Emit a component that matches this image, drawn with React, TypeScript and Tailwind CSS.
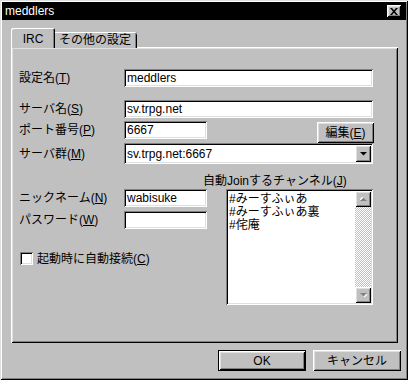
import React from "react";

const raised =
  "shadow-[inset_1px_1px_#fff,inset_-1px_-1px_#000,inset_2px_2px_#dfdfdf,inset_-2px_-2px_#808080]";
const sunken =
  "shadow-[inset_1px_1px_#808080,inset_-1px_-1px_#fff,inset_2px_2px_#000,inset_-2px_-2px_#dfdfdf]";

const Key = ({ k }: { k: string }) => (
  <>
    (<span className="underline underline-offset-1">{k}</span>)
  </>
);

const Label = ({ text, k }: { text: string; k: string }) => (
  <div className="flex h-[18px] w-[105px] shrink-0 items-center whitespace-nowrap">
    {text}
    <Key k={k} />
  </div>
);

const Input = ({ value, w }: { value?: string; w: string }) => (
  <div className={`flex h-[18px] items-center bg-white pl-[3px] ${w} ${sunken}`}>{value}</div>
);

const Arrow = ({ down, disabled }: { down?: boolean; disabled?: boolean }) => (
  <svg width="7" height="4" viewBox="0 0 7 4" className={down ? "" : "rotate-180"}>
    {disabled && <path d="M1 1h7L4.5 4.5z" fill="#fff" />}
    <path d="M0 0h7L3.5 3.5z" fill={disabled ? "#808080" : "#000"} />
  </svg>
);

const App = () => {
  return (
    <div className="h-[380px] w-[408px] overflow-hidden bg-[#c0c0c0] p-[2px] text-[12px] leading-none text-black font-[family-name:'Liberation_Sans','Noto_Sans_CJK_JP',sans-serif] shadow-[inset_1px_1px_#dfdfdf,inset_-1px_-1px_#000,inset_2px_2px_#fff,inset_-2px_-2px_#808080]">
      <div className="h-[376px] w-[404px]">
        {/* TITLE */}
        <div className="flex h-[18px] items-center justify-between bg-black pl-[3px] text-white">
          <span>meddlers</span>
          <div className={`mr-[5px] flex h-[12px] w-[14px] items-center justify-center bg-[#c0c0c0] ${raised}`}>
            <svg width="8" height="7" viewBox="0 0 8 7">
              <path d="M0 0h2l2 2.2L6 0h2L5 3.5 8 7H6L4 4.8 2 7H0l3-3.5z" fill="#000" />
            </svg>
          </div>
        </div>

        {/* TABS */}
        <div className="ml-[9px] mt-[8px] flex h-[20px] items-end">
          <div className="relative z-10 flex h-[20px] w-[44px] items-start justify-center rounded-t-[2px] bg-[#c0c0c0] pt-[5px] shadow-[inset_1px_1px_#fff,inset_-1px_0_#000,inset_-2px_0_#808080]">
            IRC
          </div>
          <div className="flex h-[16px] items-center rounded-tr-[2px] bg-[#c0c0c0] pl-[4px] pr-[6px] shadow-[inset_0_1px_#fff,inset_-1px_0_#000,inset_-2px_0_#808080]">
            その他の設定
          </div>
        </div>

        {/* PANEL */}
        <div className={`-mt-px ml-[9px] h-[296px] w-[387px] pl-[8px] pt-[22px] ${raised}`}>
          <div className="flex items-center">
            <Label text="設定名" k="T" />
            <Input value="meddlers" w="w-[249px]" />
          </div>
          <div className="mt-[13px] flex items-center">
            <Label text="サーバ名" k="S" />
            <Input value="sv.trpg.net" w="w-[249px]" />
          </div>
          <div className="mt-[3px] flex h-[22px] items-start">
            <Label text="ポート番号" k="P" />
            <Input value="6667" w="w-[83px]" />
            <div className={`ml-[110px] mt-px flex h-[21px] w-[57px] items-center justify-center ${raised}`}>
              編集<Key k="E" />
            </div>
          </div>
          <div className="flex items-center">
            <div className="flex h-[21px] w-[105px] shrink-0 items-center">
              サーバ群<Key k="M" />
            </div>
            <div className={`flex h-[21px] w-[249px] items-center justify-between bg-white pl-[3px] ${sunken}`}>
              <span>sv.trpg.net:6667</span>
              <div className={`mr-[2px] flex h-[17px] w-[16px] items-center justify-center bg-[#c0c0c0] ${raised}`}>
                <Arrow down />
              </div>
            </div>
          </div>

          <div className="ml-[184px] mt-[8px] flex h-[17px] items-center whitespace-nowrap">
            自動Joinするチャンネル<Key k="J" />
          </div>

          <div className="flex">
            <div className="w-[207px] shrink-0">
              <div className="flex items-center">
                <Label text="ニックネーム" k="N" />
                <Input value="wabisuke" w="w-[83px]" />
              </div>
              <div className="mt-[4px] flex items-center">
                <Label text="パスワード" k="W" />
                <Input w="w-[83px]" />
              </div>
              <div className="mt-[23px] flex items-center gap-[4px] pl-px">
                <div className={`h-[13px] w-[13px] bg-white ${sunken}`} />
                <span>
                  起動時に自動接続<Key k="C" />
                </span>
              </div>
            </div>

            <div className={`flex h-[116px] w-[147px] bg-white ${sunken}`}>
              <div className="flex-1 pl-[3px] pt-[4px] leading-[13px]">
                <div>#みーすふぃあ</div>
                <div>#みーすふぃあ裏</div>
                <div>#侘庵</div>
              </div>
              <div className="my-[2px] mr-[2px] flex w-[16px] flex-col">
                <div className={`flex h-[16px] items-center justify-center bg-[#c0c0c0] ${raised}`}>
                  <Arrow disabled />
                </div>
                <div className="flex-1 bg-[repeating-conic-gradient(#c0c0c0_0%_25%,#fff_0%_50%)] bg-[length:2px_2px]" />
                <div className={`flex h-[16px] items-center justify-center bg-[#c0c0c0] ${raised}`}>
                  <Arrow down disabled />
                </div>
              </div>
            </div>
          </div>
        </div>

        {/* BUTTONS */}
        <div className="mt-[7px] flex justify-end gap-[7px] pr-[5px]">
          <div className={`flex h-[21px] w-[88px] items-center justify-center border border-black ${raised}`}>
            OK
          </div>
          <div className={`flex h-[21px] w-[88px] items-center justify-center ${raised}`}>
            キャンセル
          </div>
        </div>
      </div>
    </div>
  );
};

export default App;
